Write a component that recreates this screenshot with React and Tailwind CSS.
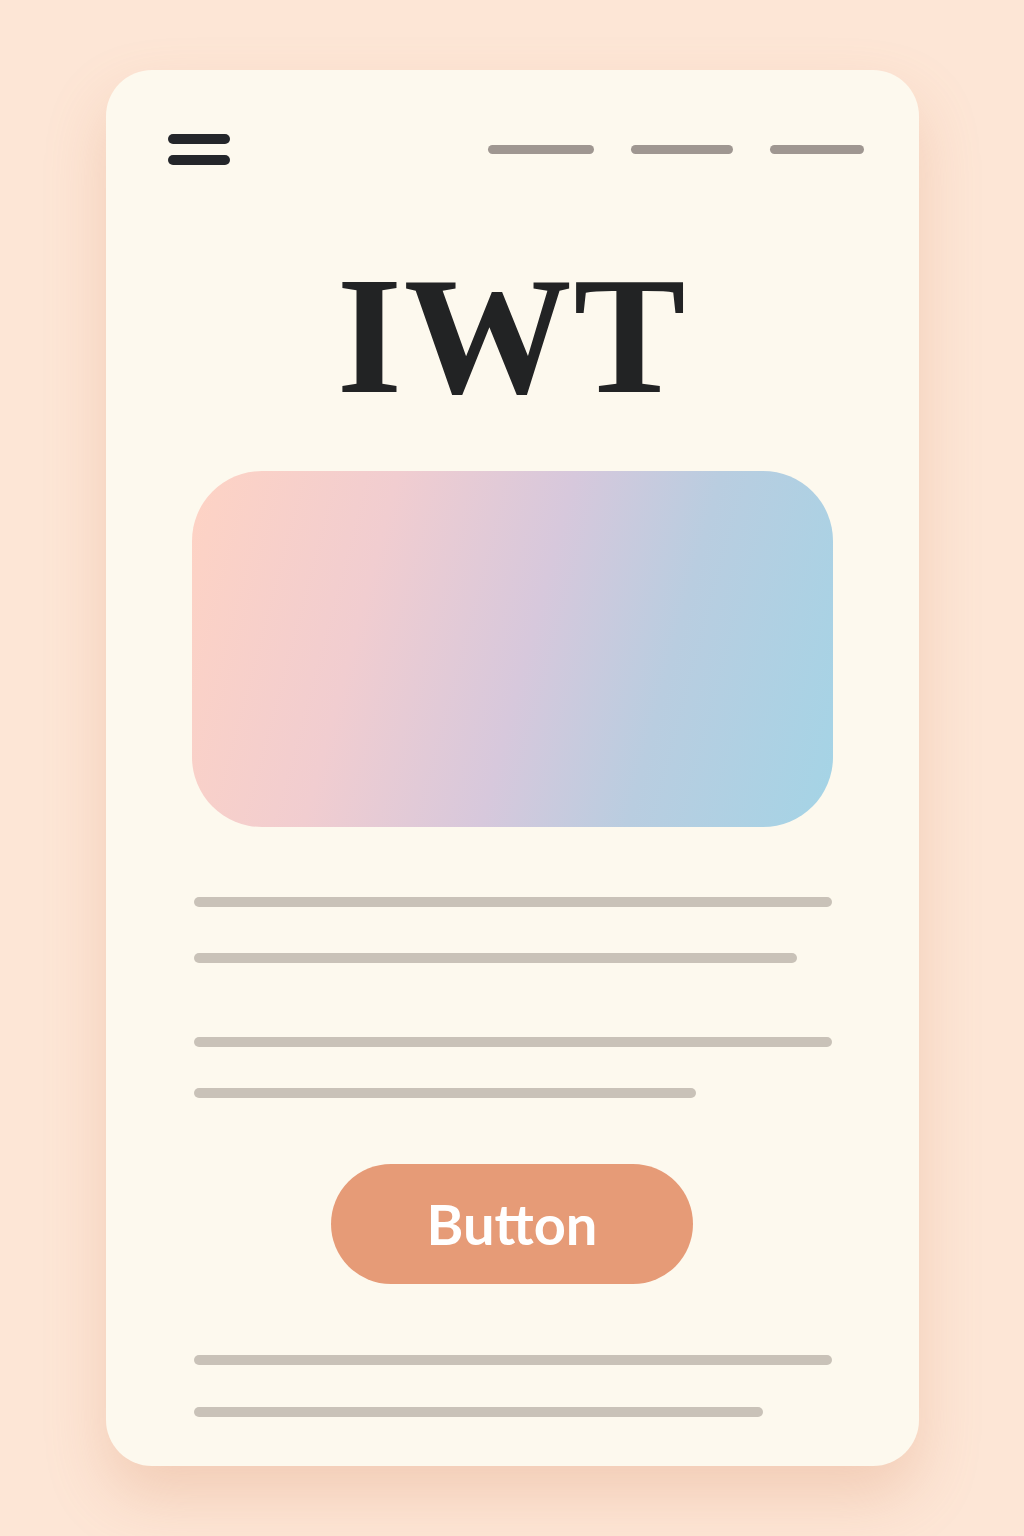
export default function App() {
  return (
    <div className="min-h-[1536px] w-full bg-[#fde6d6] pt-[70px]">
      <div className="mx-auto flex h-[1396px] w-[813px] flex-col rounded-[46px] bg-[#fdf9ee] shadow-[0_30px_60px_rgba(214,140,100,0.28)]">
        {/* header */}
        <div className="flex items-center justify-between pl-[62px] pr-[55px] pt-[64px]">
          <div className="flex flex-col gap-[11px]">
            <div className="h-[10px] w-[62px] rounded-full bg-[#24262a]" />
            <div className="h-[10px] w-[62px] rounded-full bg-[#24262a]" />
          </div>
          <div className="flex items-center gap-[37px]">
            <div className="h-[9px] w-[106px] rounded-full bg-[#9f9791]" />
            <div className="h-[9px] w-[102px] rounded-full bg-[#9f9791]" />
            <div className="h-[9px] w-[94px] rounded-full bg-[#9f9791]" />
          </div>
        </div>

        {/* title */}
        <h1 className="mt-[86px] text-center font-['Liberation_Serif',serif] text-[168px] font-bold leading-none tracking-[0.01em] text-[#222324]">
          IWT
        </h1>

        {/* gradient card */}
        <div className="mx-auto mt-[52px] h-[356px] w-[641px] shrink-0 rounded-[70px] bg-[linear-gradient(105deg,#fed3c4_0%,#f1cdd0_28%,#d7c8dc_52%,#b9cde0_72%,#a4d4e6_100%)]" />

        {/* lines */}
        <div className="flex flex-col pl-[88px]">
          <div className="mt-[70px] h-[10px] w-[638px] rounded-full bg-[#c9c2b8]" />
          <div className="mt-[46px] h-[10px] w-[603px] rounded-full bg-[#c9c2b8]" />
          <div className="mt-[74px] h-[10px] w-[638px] rounded-full bg-[#c9c2b8]" />
          <div className="mt-[41px] h-[10px] w-[502px] rounded-full bg-[#c9c2b8]" />
        </div>

        {/* button */}
        <div className="mt-[66px] flex justify-center">
          <button className="flex h-[120px] w-[362px] items-center justify-center rounded-full bg-[#e69b77] font-['Lato',sans-serif] text-[56px] font-bold text-white">
            Button
          </button>
        </div>

        {/* bottom lines */}
        <div className="flex flex-col pl-[88px]">
          <div className="mt-[71px] h-[10px] w-[638px] rounded-full bg-[#c9c2b8]" />
          <div className="mt-[42px] h-[10px] w-[569px] rounded-full bg-[#c9c2b8]" />
        </div>
      </div>
    </div>
  );
}
